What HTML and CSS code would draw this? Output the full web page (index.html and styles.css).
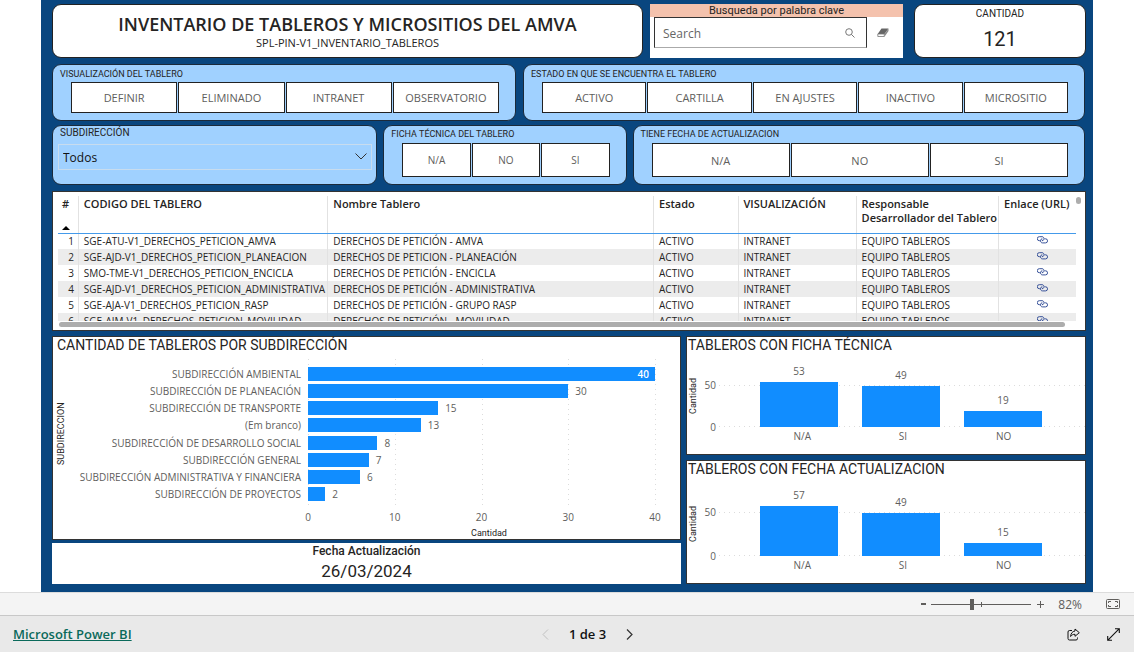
FILE: index.html
```html
<!DOCTYPE html>
<html lang="es">
<head>
<meta charset="utf-8">
<meta name="viewport" content="width=device-width, initial-scale=1">
<title>Inventario de tableros y micrositios del AMVA</title>
<link rel="stylesheet" href="styles.css">
</head>
<body>
<svg class="defs" aria-hidden="true">
  <symbol id="link" viewBox="0 0 11 8">
    <path d="M3.500 4.700H2.300A1.900 1.900 0 0 1 2.300 .7H5A1.900 1.900 0 0 1 6.800 3.400L6 4.600H5" fill="none" stroke="currentColor" stroke-width=".9"/>
    <path d="M7.500 2.800H8.500A2 2 0 0 1 8.500 6.900H5.500A1.900 1.900 0 0 1 3.700 4.300L4.400 2.900H5.400" fill="none" stroke="currentColor" stroke-width=".9"/>
  </symbol>
</svg>
<main class="viewport">
  <div class="report">
    <header class="row row-head">
      <div class="card title-card">
        <h1>INVENTARIO DE TABLEROS Y MICROSITIOS DEL AMVA</h1>
        <p>SPL-PIN-V1_INVENTARIO_TABLEROS</p>
      </div>
      <form class="search">
        <label class="search-title" for="q">Busqueda por palabra clave</label>
        <div class="search-row">
          <div class="search-box">
            <input id="q" type="text" placeholder="Search">
            <button type="button" class="icon-btn" aria-label="Buscar">
              <svg width="10" height="10" viewBox="0 0 10 10" fill="none" stroke="#777"><circle cx="4" cy="4" r="3.300"/><path d="M6.300 6.300l3.200 3.200"/></svg>
            </button>
          </div>
          <button type="button" class="icon-btn" aria-label="Borrar">
            <svg width="12" height="10" viewBox="0 0 12 10"><path d="M4.500 .5H11.500L7.500 6H.7z" fill="#666"/><path d="M.8 6V8.500H7.300V6z" fill="#fff" stroke="#777" stroke-width=".8"/><path d="M7.500 6L11.500 .5V3L7.500 8.800z" fill="#888"/></svg>
          </button>
        </div>
      </form>
      <div class="card count-card">
        <span class="count-label">CANTIDAD</span>
        <span class="count-value">121</span>
      </div>
    </header>

    <div class="row row-two">
      <section class="slicer">
        <h2>VISUALIZACIÓN DEL TABLERO</h2>
        <div class="tiles">
          <button type="button">DEFINIR</button><button type="button">ELIMINADO</button><button type="button">INTRANET</button><button type="button">OBSERVATORIO</button>
        </div>
      </section>
      <section class="slicer">
        <h2>ESTADO EN QUE SE ENCUENTRA EL TABLERO</h2>
        <div class="tiles">
          <button type="button">ACTIVO</button><button type="button">CARTILLA</button><button type="button">EN AJUSTES</button><button type="button">INACTIVO</button><button type="button">MICROSITIO</button>
        </div>
      </section>
    </div>

    <div class="row row-three">
      <section class="slicer slicer-drop">
        <h2><label for="sub">SUBDIRECCIÓN</label></h2>
        <div class="drop">
          <select id="sub"><option>Todos</option></select>
          <svg class="drop-arrow" width="12" height="7" viewBox="0 0 12 7" fill="none" stroke="#333"><path d="M.5.5L6 6 11.500.5"/></svg>
        </div>
      </section>
      <section class="slicer tall">
        <h2>FICHA TÉCNICA DEL TABLERO</h2>
        <div class="tiles small">
          <button type="button">N/A</button><button type="button">NO</button><button type="button">SI</button>
        </div>
      </section>
      <section class="slicer tall">
        <h2>TIENE FECHA DE ACTUALIZACION</h2>
        <div class="tiles">
          <button type="button">N/A</button><button type="button">NO</button><button type="button">SI</button>
        </div>
      </section>
    </div>

    <section class="visual table-visual">
      <div class="table-clip">
        <table>
          <colgroup><col class="c-num"><col class="c-code"><col class="c-name"><col class="c-state"><col class="c-view"><col class="c-owner"><col class="c-url"></colgroup>
          <thead>
            <tr><th>#<svg class="sort" width="8" height="4" viewBox="0 0 8 4"><path d="M0 4L4 0l4 4z"/></svg></th><th>CODIGO DEL TABLERO</th><th>Nombre Tablero</th><th>Estado</th><th>VISUALIZACIÓN</th><th>Responsable<br>Desarrollador del Tablero</th><th>Enlace (URL)</th></tr>
          </thead>
          <tbody>
            <tr><td>1</td><td>SGE-ATU-V1_DERECHOS_PETICION_AMVA</td><td>DERECHOS DE PETICIÓN - AMVA</td><td>ACTIVO</td><td>INTRANET</td><td>EQUIPO TABLEROS</td><td><a href="#" aria-label="Enlace"><svg width="11" height="8"><use href="#link"/></svg></a></td></tr>
            <tr><td>2</td><td>SGE-AJD-V1_DERECHOS_PETICION_PLANEACION</td><td>DERECHOS DE PETICION - PLANEACIÓN</td><td>ACTIVO</td><td>INTRANET</td><td>EQUIPO TABLEROS</td><td><a href="#" aria-label="Enlace"><svg width="11" height="8"><use href="#link"/></svg></a></td></tr>
            <tr><td>3</td><td>SMO-TME-V1_DERECHOS_PETICION_ENCICLA</td><td>DERECHOS DE PETICIÓN - ENCICLA</td><td>ACTIVO</td><td>INTRANET</td><td>EQUIPO TABLEROS</td><td><a href="#" aria-label="Enlace"><svg width="11" height="8"><use href="#link"/></svg></a></td></tr>
            <tr><td>4</td><td>SGE-AJD-V1_DERECHOS_PETICION_ADMINISTRATIVA</td><td>DERECHOS DE PETICIÓN - ADMINISTRATIVA</td><td>ACTIVO</td><td>INTRANET</td><td>EQUIPO TABLEROS</td><td><a href="#" aria-label="Enlace"><svg width="11" height="8"><use href="#link"/></svg></a></td></tr>
            <tr><td>5</td><td>SGE-AJA-V1_DERECHOS_PETICION_RASP</td><td>DERECHOS DE PETICIÓN - GRUPO RASP</td><td>ACTIVO</td><td>INTRANET</td><td>EQUIPO TABLEROS</td><td><a href="#" aria-label="Enlace"><svg width="11" height="8"><use href="#link"/></svg></a></td></tr>
            <tr><td>6</td><td>SGE-AJM-V1_DERECHOS_PETICION_MOVILIDAD</td><td>DERECHOS DE PETICIÓN - MOVILIDAD</td><td>ACTIVO</td><td>INTRANET</td><td>EQUIPO TABLEROS</td><td><a href="#" aria-label="Enlace"><svg width="11" height="8"><use href="#link"/></svg></a></td></tr>
          </tbody>
        </table>
        <div class="v-thumb"></div>
      </div>
      <div class="h-thumb"></div>
    </section>

    <div class="row row-charts">
      <div class="stack left">
        <section class="visual bar-visual">
          <h2>CANTIDAD DE TABLEROS POR SUBDIRECCIÓN</h2>
          <div class="bar-chart">
            <span class="y-title">SUBDIRECCION</span>
            <div class="bar-labels">
              <span>SUBDIRECCIÓN AMBIENTAL</span><span>SUBDIRECCIÓN DE PLANEACIÓN</span><span>SUBDIRECCIÓN DE TRANSPORTE</span><span>(Em branco)</span><span>SUBDIRECCIÓN DE DESARROLLO SOCIAL</span><span>SUBDIRECCIÓN GENERAL</span><span>SUBDIRECCIÓN ADMINISTRATIVA Y FINANCIERA</span><span>SUBDIRECCIÓN DE PROYECTOS</span>
            </div>
            <div class="bar-plot">
              <div class="bar-grid"><i></i><i></i><i></i><i></i><i></i></div>
              <div class="bar-row"><div class="bar full" style="width:100%">40</div></div>
              <div class="bar-row"><div class="bar" style="width:75%"></div><span>30</span></div>
              <div class="bar-row"><div class="bar" style="width:37.5%"></div><span>15</span></div>
              <div class="bar-row"><div class="bar" style="width:32.5%"></div><span>13</span></div>
              <div class="bar-row"><div class="bar" style="width:20%"></div><span>8</span></div>
              <div class="bar-row"><div class="bar" style="width:17.5%"></div><span>7</span></div>
              <div class="bar-row"><div class="bar" style="width:15%"></div><span>6</span></div>
              <div class="bar-row"><div class="bar" style="width:5%"></div><span>2</span></div>
            </div>
            <div class="x-axis">
              <div class="x-ticks"><span>0</span><span>10</span><span>20</span><span>30</span><span>40</span></div>
            </div>
            <span class="x-title">Cantidad</span>
          </div>
        </section>
        <section class="date-card">
          <h2>Fecha Actualización</h2>
          <p>26/03/2024</p>
        </section>
      </div>
      <div class="stack right">
        <section class="visual col-visual">
          <h2>TABLEROS CON FICHA TÉCNICA</h2>
          <div class="col-chart first">
            <span class="y-title">Cantidad</span>
            <div class="y-ticks"><span>50</span><span>0</span></div>
            <div class="col-plot">
              <div class="col-grid"></div>
              <div class="col"><span>53</span><div class="fill" style="height:106%"></div></div>
              <div class="col"><span>49</span><div class="fill" style="height:98%"></div></div>
              <div class="col"><span>19</span><div class="fill" style="height:38%"></div></div>
            </div>
            <div class="col-names"><span>N/A</span><span>SI</span><span>NO</span></div>
          </div>
        </section>
        <section class="visual col-visual">
          <h2>TABLEROS CON FECHA ACTUALIZACION</h2>
          <div class="col-chart second">
            <span class="y-title">Cantidad</span>
            <div class="y-ticks"><span>50</span><span>0</span></div>
            <div class="col-plot">
              <div class="col-grid"></div>
              <div class="col"><span>57</span><div class="fill" style="height:114%"></div></div>
              <div class="col"><span>49</span><div class="fill" style="height:98%"></div></div>
              <div class="col"><span>15</span><div class="fill" style="height:30%"></div></div>
            </div>
            <div class="col-names"><span>N/A</span><span>SI</span><span>NO</span></div>
          </div>
        </section>
      </div>
    </div>
  </div>
</main>

<div class="zoom-bar">
  <button type="button" class="icon-btn zoom-sign" aria-label="Alejar"><svg width="5" height="2" viewBox="0 0 5 2"><path d="M0 1h5" stroke="#605e5c" stroke-width="2"/></svg></button>
  <div class="zoom-slider"><i class="tick"></i><input type="range" min="0" max="100" value="40" aria-label="Zoom"></div>
  <button type="button" class="icon-btn zoom-sign" aria-label="Acercar"><svg width="7" height="7" viewBox="0 0 7 7"><path d="M0 3.500h7M3.500 0v7" stroke="#605e5c"/></svg></button>
  <span class="zoom-value">82%</span>
  <button type="button" class="icon-btn" aria-label="Ajustar a la página">
    <svg width="14" height="10" viewBox="0 0 14 10" fill="none" stroke="#605e5c"><rect x=".5" y=".5" width="13" height="9" rx="1"/><path d="M5 2.500H2.500v1.500M2.500 6v1.500H5M9 2.500h2.500v1.500M11.500 6v1.500H9"/></svg>
  </button>
</div>
<footer class="footer">
  <a class="brand" href="#">Microsoft Power BI</a>
  <nav class="pager">
    <button type="button" class="icon-btn" aria-label="Anterior" disabled><svg width="7" height="11" viewBox="0 0 7 11" fill="none" stroke="#c0c0c0"><path d="M6 .5l-5 5 5 5"/></svg></button>
    <span>1 de 3</span>
    <button type="button" class="icon-btn" aria-label="Siguiente"><svg width="7" height="11" viewBox="0 0 7 11" fill="none" stroke="#333" stroke-width="1.200"><path d="M1 .5l5 5-5 5"/></svg></button>
  </nav>
  <div class="actions">
    <button type="button" class="icon-btn" aria-label="Compartir"><svg width="13" height="13" viewBox="0 0 13 13" fill="none" stroke="#111" stroke-linejoin="round"><path d="M5 2.500H2.500a1.500 1.500 0 0 0-1.500 1.500v6.500A1.500 1.500 0 0 0 2.500 12H9a1.500 1.500 0 0 0 1.500-1.500V9.500"/><path d="M8 1l4.300 3.700L8 8.300V6.300C6 6.200 4.600 7 3.600 8.500 3.800 5.500 5.300 3.300 8 3z"/></svg></button>
    <button type="button" class="icon-btn" aria-label="Pantalla completa"><svg width="13" height="13" viewBox="0 0 13 13" fill="none" stroke="#111" stroke-width="1.100"><path d="M8 .7h4.300V5M.7 8v4.300H5M12.300.7L.7 12.300"/></svg></button>
  </div>
</footer>
</body>
</html>
```
FILE: styles.css
```css
* { box-sizing: border-box; }

body {
  margin: 0;
  min-height: 100vh;
  display: flex;
  flex-direction: column;
  background: #fff;
  color: #252423;
  font-family: "Open Sans", "Noto Sans", sans-serif;
  font-size: 10px;
}

h1, h2, p { margin: 0; font-weight: 400; }
button, input, select { font: inherit; color: inherit; }
svg { display: block; }
.defs { position: absolute; width: 0; height: 0; }

.icon-btn {
  display: flex;
  align-items: center;
  justify-content: center;
  padding: 0;
  border: 0;
  background: none;
}

.viewport { flex: 1; padding: 0 41px; }

.report {
  display: flex;
  flex-direction: column;
  min-height: 100%;
  padding: 4px 7px 8px 11px;
  background: #09467f;
}

.row { display: grid; }

/* Header */
.row-head { grid-template-columns: 591fr 253fr 176fr; column-gap: 7px; height: 54px; }

.card {
  display: flex;
  flex-direction: column;
  align-items: center;
  border: 1px solid #222;
  border-radius: 9px;
  background: #fff;
}

.title-card { padding-top: 7px; }
.title-card h1 { font-size: 18px; line-height: 24px; font-weight: 600; }
.title-card p { font-size: 11px; line-height: 14px; }

.search { background: #fff; }
.search-title {
  display: block;
  background: #f4c2ad;
  text-align: center;
  font: 11px/13px Roboto, sans-serif;
}
.search-row { display: flex; padding-left: 4px; }
.search-box {
  flex: 1;
  display: flex;
  height: 31px;
  padding: 1px 11px 0 8px;
  border: 1px solid #333;
  border-bottom-color: #aaa;
}
.search-box input {
  flex: 1;
  min-width: 0;
  padding: 0;
  border: 0;
  outline: 0;
  background: none;
  font-size: 12px;
}
.search-box input::placeholder { color: #666; opacity: 1; }
.search-row > .icon-btn { width: 36px; padding-right: 5px; }

.count-card { margin-left: 4px; padding-top: 2px; font-family: Roboto, sans-serif; }
.count-label { font-size: 10px; line-height: 14px; }
.count-value { font-size: 20px; line-height: 36px; }

/* Slicers */
.row-two { grid-template-columns: 464fr 562fr; column-gap: 7px; margin: 6px 1px 0 0; }
.row-three { grid-template-columns: 325fr 243fr 452fr; column-gap: 6px; margin: 4px 1px 0 0; }

.slicer {
  padding: 3px 16px 7px 18px;
  border: 1px solid #1b2a3a;
  border-radius: 9px;
  background: #a0d1ff;
}
.slicer h2 { margin-left: -11px; font: 9px/12px Roboto, sans-serif; }
.slicer.tall { padding-top: 2px; }
.tiles { display: flex; gap: 1px; margin-top: 2px; }
.tiles button {
  flex: 1;
  height: 31px;
  padding: 0;
  border: 1px solid #222;
  background: #fff;
  color: #605e5c;
  font-size: 11px;
}
.tall .tiles { margin-top: 3px; }
.tall .tiles button { height: 34px; }
.tiles.small button { font-size: 10px; }
.slicer.slicer-drop { padding: 1px 4px 14px 5px; }
.slicer-drop h2 { margin-left: 2px; font-size: 10px; }
.drop { position: relative; margin-top: 5px; }
.drop select {
  appearance: none;
  width: 100%;
  height: 26px;
  padding: 0 24px 0 4px;
  border: 1px solid #c8dcee;
  border-radius: 0;
  background: transparent;
  color: #111;
  font-size: 12px;
}
.drop-arrow { position: absolute; right: 5px; top: 9px; pointer-events: none; }

/* Table */
.visual { border: 1px solid #333; background: #fff; }
.table-visual { margin-top: 6px; padding: 4px 4px 3px 5px; }
.table-clip { position: relative; height: 125px; padding-right: 5px; overflow: hidden; }
table { width: 100%; border-collapse: collapse; table-layout: fixed; }
.c-num { width: 2%; }
.c-code { width: 24.5%; }
.c-name { width: 32%; }
.c-state { width: 8.3%; }
.c-view { width: 11.6%; }
.c-owner { width: 14%; }
.c-url { width: 7.6%; }
th, td { text-align: left; border-right: 1px solid #e2e2e2; white-space: nowrap; overflow: hidden; }
th:last-child, td:last-child { border-right: 0; }
th {
  height: 37px;
  padding: 1px 0 0 5px;
  border-bottom: 1px solid #449aea;
  vertical-align: top;
  font-size: 11px;
  line-height: 14px;
  font-weight: 600;
}
th:first-child { padding-left: 4px; }
.sort { margin-top: 15px; }
td { height: 16px; padding: 0 0 0 5px; line-height: 14px; }
tbody tr:nth-child(even) { background: #ececec; }
td:first-child { padding: 0 4px; text-align: right; }
td a { display: flex; justify-content: center; padding: 0 0 3px 4px; color: #23408f; }
.h-thumb { height: 5px; margin: 1px 16px 0 1px; border-radius: 3px; background: #adadad; }
.v-thumb { position: absolute; right: 0; top: 1px; width: 5px; height: 7px; border-radius: 3px; background: #adadad; }

/* Charts */
.row-charts { grid-template-columns: 629fr 400fr; column-gap: 5px; margin-top: 5px; }
.stack { display: flex; flex-direction: column; gap: 3px; }
.right { gap: 5px; }
.visual h2 { padding-left: 4px; font: 14px/16px Roboto, sans-serif; }
.right .visual h2 { padding-left: 1px; }

.y-title {
  writing-mode: vertical-rl;
  transform: rotate(180deg);
  text-align: center;
  font: 9px/12px Roboto, sans-serif;
}

.bar-visual { height: 204px; }
.bar-chart {
  display: grid;
  grid-template-columns: 14px 239px 1fr;
  grid-template-rows: 138px 24px 12px;
  margin: 12px 25px 0 2px;
  color: #605e5c;
}
.bar-labels, .bar-plot { display: grid; grid-template-rows: repeat(8, 1fr); align-items: center; }
.bar-labels { text-align: right; padding-right: 7px; line-height: 14px; }
.bar-plot { position: relative; }
.bar-grid { position: absolute; inset: -6px 0; display: flex; justify-content: space-between; }
.bar-grid i { width: 1px; margin-right: -1px; background: repeating-linear-gradient(#dcdcdc 0 1px, transparent 1px 5px); }
.bar-row { position: relative; display: flex; align-items: center; gap: 7px; }
.bar { height: 14px; background: #118dff; }
.bar.full { padding-right: 6px; text-align: right; line-height: 14px; color: #fff; font-weight: 600; }
.x-axis { grid-column: 3; padding-top: 7px; }
.x-ticks { display: flex; justify-content: space-between; margin: 0 -10px; line-height: 14px; }
.x-ticks span { width: 20px; text-align: center; }
.x-title { grid-column: 3; padding-left: 15px; text-align: center; font: 9px/12px Roboto, sans-serif; color: #252423; }
.bar-chart .y-title, .col-chart .y-title { color: #252423; }

.date-card {
  flex: 1;
  background: #fff;
  text-align: center;
  font-family: Roboto, sans-serif;
}
.date-card h2 { font-size: 12px; line-height: 16px; font-weight: 500; }
.date-card p { font-size: 17px; line-height: 24px; }

.col-visual.visual { padding-bottom: 10px; }
.col-chart {
  display: grid;
  grid-template-columns: 10px 16px 1fr;
  color: #605e5c;
  column-gap: 3px;
}
.first { grid-template-rows: 42px 17px; padding-top: 32px; }
.second { grid-template-rows: 44px 17px; padding-top: 35px; }
.y-ticks { display: flex; flex-direction: column; justify-content: space-between; margin: -7px 0; text-align: right; line-height: 14px; }
.col-chart .y-title { margin: -20px 0 0; align-self: center; }
.col-plot { position: relative; display: flex; align-items: flex-end; padding: 0 31px 0 29px; }
.col-grid {
  position: absolute;
  inset: 0;
  background:
    repeating-linear-gradient(90deg, #dcdcdc 0 1px, transparent 1px 5px) top / 100% 1px no-repeat,
    repeating-linear-gradient(90deg, #dcdcdc 0 1px, transparent 1px 5px) bottom / 100% 1px no-repeat;
}
.col { position: relative; flex: 1; height: 100%; display: flex; flex-direction: column; justify-content: flex-end; align-items: center; }
.col span { line-height: 14px; margin-bottom: 4px; }
.col .fill { flex: none; width: 76%; background: #118dff; }
.col-names { grid-column: 3; display: flex; padding: 2px 31px 0 33px; }
.col-names span { flex: 1; text-align: center; line-height: 14px; }

/* Status bar and footer */
.zoom-bar {
  display: flex;
  align-items: center;
  justify-content: flex-end;
  height: 24px;
  padding-right: 14px;
  border-top: 1px solid #dcdcdc;
  border-bottom: 1px solid #c8c8c8;
  background: #f4f4f4;
  color: #605e5c;
}
.zoom-slider { position: relative; width: 100px; height: 16px; margin: 0 6px 0 5px; }
.zoom-slider input { appearance: none; display: block; width: 100%; height: 16px; margin: 0; background: linear-gradient(#605e5c, #605e5c) center / 100% 1px no-repeat; }
.zoom-slider input::-webkit-slider-thumb { appearance: none; width: 4px; height: 11px; background: #605e5c; }
.tick { position: absolute; left: 50%; top: 6px; width: 1px; height: 5px; background: #605e5c; }
.zoom-value { margin: 0 24px 0 14px; font-size: 12px; }

.footer {
  display: grid;
  grid-template-columns: 1fr auto 1fr;
  align-items: center;
  height: 36px;
  padding: 0 14px 0 13px;
  background: #e9e9e9;
}
.footer > * { padding-bottom: 0; }
.brand { justify-self: start; color: #0b6a5b; font-size: 13px; line-height: 32px; font-weight: 600; }
.pager { display: flex; align-items: center; gap: 20px; padding-left: 42px; color: #111; font-size: 13px; font-weight: 600; }
.actions { justify-self: end; display: flex; gap: 27px; }
```
